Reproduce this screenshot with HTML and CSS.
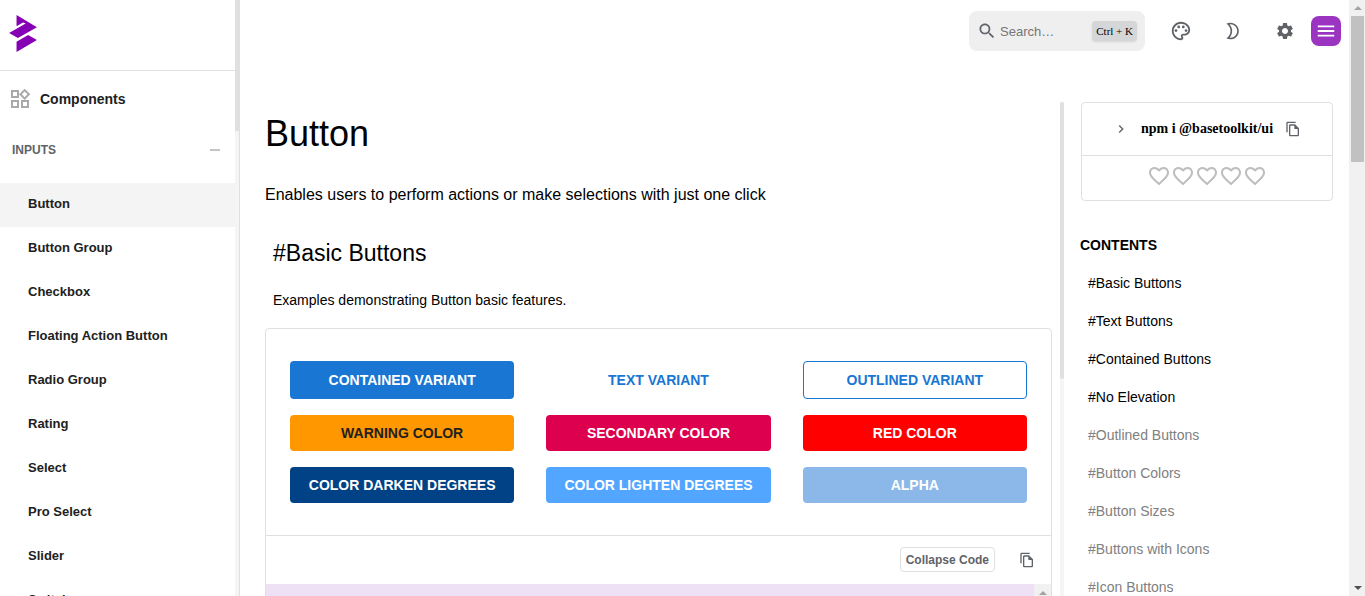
FILE: index.html
```html
<!DOCTYPE html>
<html lang="en">
<head>
<meta charset="utf-8">
<title>Button - Components</title>
<link rel="stylesheet" href="styles.css">
</head>
<body>
<svg class="sprite" aria-hidden="true">
  <symbol id="heart" viewBox="0 0 24 24"><path d="M16.5 3c-1.74 0-3.41.81-4.5 2.09C10.91 3.81 9.24 3 7.5 3 4.42 3 2 5.42 2 8.5c0 3.78 3.4 6.86 8.55 11.54L12 21.35l1.45-1.32C18.6 15.36 22 12.28 22 8.5 22 5.42 19.58 3 16.5 3zm-4.4 15.55l-.1.1-.1-.1C7.14 14.24 4 11.39 4 8.5 4 6.5 5.5 5 7.5 5c1.54 0 3.04.99 3.57 2.36h1.87C13.46 5.99 14.96 5 16.5 5c2 0 3.5 1.5 3.5 3.5 0 2.89-3.14 5.74-7.9 10.05z"/></symbol>
  <symbol id="copy" viewBox="0 0 24 24"><path d="M16 1H4c-1.1 0-2 .9-2 2v14h2V3h12V1zm-1 4H8c-1.1 0-1.99.9-1.99 2L6 21c0 1.1.89 2 1.99 2H19c1.1 0 2-.9 2-2V11l-6-6zM8 21V7h6v5h5v9H8z"/></symbol>
</svg>
<div class="app">
  <aside class="sidebar">
    <div class="sidebar-content">
      <a class="brand" href="#" aria-label="Home">
        <svg class="logo" viewBox="27 45 82 109"><path d="M49 45L109 81 53 113 27 98 76 70 68 67 49 78zM49 124L83 104 109 119 49 154z"/></svg>
      </a>
      <div class="section">
        <svg class="icon icon-24" viewBox="0 0 24 24"><path d="M16.66 4.52l2.83 2.83-2.83 2.83-2.83-2.83 2.83-2.83M9 5v4H5V5h4m10 10v4h-4v-4h4M9 15v4H5v-4h4m7.66-13.31L11 7.34 16.66 13l5.66-5.66-5.66-5.65zM11 3H3v8h8V3zm10 10h-8v8h8v-8zm-10 0H3v8h8v-8z"/></svg>
        <span>Components</span>
      </div>
      <button class="group" type="button"><span>INPUTS</span><span class="minus"></span></button>
      <nav class="nav">
        <a class="active" href="#">Button</a>
        <a href="#">Button Group</a>
        <a href="#">Checkbox</a>
        <a href="#">Floating Action Button</a>
        <a href="#">Radio Group</a>
        <a href="#">Rating</a>
        <a href="#">Select</a>
        <a href="#">Pro Select</a>
        <a href="#">Slider</a>
        <a href="#">Switch</a>
      </nav>
    </div>
    <div class="rail rail-side"><div class="rail-thumb"></div></div>
  </aside>

  <div class="page">
    <header class="topbar">
      <label class="search">
        <svg class="icon icon-20" viewBox="0 0 24 24"><path d="M15.5 14h-.79l-.28-.27C15.41 12.59 16 11.11 16 9.5 16 5.91 13.09 3 9.5 3S3 5.91 3 9.5 5.91 16 9.5 16c1.61 0 3.09-.59 4.23-1.57l.27.28v.79l5 4.99L20.49 19l-4.99-5zm-6 0C7.01 14 5 11.99 5 9.5S7.01 5 9.5 5 14 7.01 14 9.5 11.99 14 9.5 14z"/></svg>
        <input type="text" placeholder="Search…" aria-label="Search">
        <kbd>Ctrl + K</kbd>
      </label>
      <div class="tools">
        <button class="tool" type="button" aria-label="Theme colors">
          <svg class="icon icon-22" viewBox="0 0 24 24"><path d="M12 22C6.49 22 2 17.51 2 12S6.49 2 12 2s10 4.04 10 9c0 3.31-2.69 6-6 6h-1.77c-.28 0-.5.22-.5.5 0 .12.05.23.13.33.41.47.64 1.06.64 1.67 0 1.38-1.12 2.5-2.5 2.5zm0-18c-4.41 0-8 3.59-8 8s3.59 8 8 8c.28 0 .5-.22.5-.5 0-.16-.08-.28-.14-.35-.41-.46-.63-1.05-.63-1.65 0-1.38 1.12-2.5 2.5-2.5H16c2.21 0 4-1.79 4-4 0-3.86-3.59-7-8-7z"/><circle cx="6.5" cy="11.5" r="1.5"/><circle cx="9.5" cy="7.5" r="1.5"/><circle cx="14.5" cy="7.5" r="1.5"/><circle cx="17.5" cy="11.5" r="1.5"/></svg>
        </button>
        <button class="tool" type="button" aria-label="Dark mode">
          <svg class="icon icon-20" viewBox="0 0 24 24"><path d="M9 4c4.41 0 8 3.59 8 8s-3.59 8-8 8c-.34 0-.68-.02-1.01-.07C9.9 17.77 11 15 11 12S9.9 6.23 7.99 4.07C8.32 4.02 8.66 4 9 4m0-2c-1.82 0-3.53.5-5 1.35 2.99 1.73 5 4.95 5 8.65s-2.01 6.92-5 8.65c1.47.85 3.18 1.35 5 1.35 5.52 0 10-4.48 10-10S14.52 2 9 2z"/></svg>
        </button>
        <button class="tool" type="button" aria-label="Settings">
          <svg class="icon icon-20" viewBox="0 0 24 24"><path d="M19.14 12.94c.04-.3.06-.61.06-.94 0-.32-.02-.64-.07-.94l2.03-1.58c.18-.14.23-.41.12-.61l-1.92-3.32c-.12-.22-.37-.29-.59-.22l-2.39.96c-.5-.38-1.03-.7-1.62-.94l-.36-2.54c-.04-.24-.24-.41-.48-.41h-3.84c-.24 0-.43.17-.47.41l-.36 2.54c-.59.24-1.13.57-1.62.94l-2.39-.96c-.22-.08-.47 0-.59.22L2.74 8.87c-.12.21-.08.47.12.61l2.03 1.58c-.05.3-.09.63-.09.94s.02.64.07.94l-2.03 1.58c-.18.14-.23.41-.12.61l1.92 3.32c.12.22.37.29.59.22l2.39-.96c.5.38 1.03.7 1.62.94l.36 2.54c.05.24.24.41.48.41h3.84c.24 0 .44-.17.47-.41l.36-2.54c.59-.24 1.13-.56 1.62-.94l2.39.96c.22.08.47 0 .59-.22l1.92-3.32c.12-.22.07-.47-.12-.61l-2.01-1.58zM12 15.6c-1.98 0-3.6-1.62-3.6-3.6s1.62-3.6 3.6-3.6 3.6 1.62 3.6 3.6-1.62 3.6-3.6 3.6z"/></svg>
        </button>
      </div>
      <button class="menu" type="button" aria-label="Menu">
        <svg class="icon icon-22" viewBox="0 0 24 24"><path d="M3 18h18v-2H3v2zm0-5h18v-2H3v2zm0-7v2h18V6H3z"/></svg>
      </button>
    </header>

    <div class="body">
      <main class="article">
        <h1>Button</h1>
        <p class="lead">Enables users to perform actions or make selections with just one click</p>
        <section>
          <h2>#Basic Buttons</h2>
          <p class="note">Examples demonstrating Button basic features.</p>
          <div class="demo">
            <div class="samples">
              <button class="btn primary" type="button">CONTAINED VARIANT</button>
              <button class="btn text" type="button">TEXT VARIANT</button>
              <button class="btn outlined" type="button">OUTLINED VARIANT</button>
              <button class="btn warning" type="button">WARNING COLOR</button>
              <button class="btn secondary" type="button">SECONDARY COLOR</button>
              <button class="btn red" type="button">RED COLOR</button>
              <button class="btn darken" type="button">COLOR DARKEN DEGREES</button>
              <button class="btn lighten" type="button">COLOR LIGHTEN DEGREES</button>
              <button class="btn alpha" type="button">ALPHA</button>
            </div>
            <div class="demo-bar">
              <button class="collapse" type="button">Collapse Code</button>
              <button class="copy" type="button" aria-label="Copy code"><svg class="icon icon-16"><use href="#copy"/></svg></button>
            </div>
            <div class="code">
              <div class="code-scroll"><svg class="arrow" viewBox="0 0 8 4"><path d="M0 4L4 0 8 4z"/></svg></div>
            </div>
          </div>
        </section>
      </main>

      <aside class="toc">
        <div class="rail rail-toc"><div class="rail-thumb"></div></div>
        <div class="toc-content">
          <div class="package">
            <div class="install">
              <svg class="icon icon-16" viewBox="0 0 24 24"><path d="M10 6L8.59 7.41 13.17 12l-4.58 4.59L10 18l6-6z"/></svg>
              <code>npm i @basetoolkit/ui</code>
              <button class="copy" type="button" aria-label="Copy command"><svg class="icon icon-16"><use href="#copy"/></svg></button>
            </div>
            <div class="hearts">
              <svg class="icon icon-24"><use href="#heart"/></svg>
              <svg class="icon icon-24"><use href="#heart"/></svg>
              <svg class="icon icon-24"><use href="#heart"/></svg>
              <svg class="icon icon-24"><use href="#heart"/></svg>
              <svg class="icon icon-24"><use href="#heart"/></svg>
            </div>
          </div>
          <h3>CONTENTS</h3>
          <nav class="links">
            <a class="seen" href="#">#Basic Buttons</a>
            <a class="seen" href="#">#Text Buttons</a>
            <a class="seen" href="#">#Contained Buttons</a>
            <a class="seen" href="#">#No Elevation</a>
            <a href="#">#Outlined Buttons</a>
            <a href="#">#Button Colors</a>
            <a href="#">#Button Sizes</a>
            <a href="#">#Buttons with Icons</a>
            <a href="#">#Icon Buttons</a>
          </nav>
        </div>
      </aside>
    </div>
  </div>

  <div class="scrollbar">
    <svg class="arrow" viewBox="0 0 8 4"><path d="M0 4L4 0 8 4z"/></svg>
    <div class="scroll-thumb"></div>
    <svg class="arrow arrow-down" viewBox="0 0 8 4"><path d="M0 0L4 4 8 0z"/></svg>
  </div>
</div>
</body>
</html>
```
FILE: styles.css
```css
* { box-sizing: border-box; }

body {
  margin: 0;
  background: #fff;
  color: #000;
  font-family: "Liberation Sans", Arial, sans-serif;
  font-size: 14px;
}

h1, h2, h3, p { margin: 0; font-weight: 400; }
a { color: inherit; text-decoration: none; }

button {
  margin: 0;
  padding: 0;
  border: 0;
  background: none;
  color: inherit;
  font: inherit;
  cursor: pointer;
}

.sprite { display: none; }
.icon { display: block; flex: none; fill: currentColor; }
.icon-16 { width: 16px; height: 16px; }
.icon-20 { width: 20px; height: 20px; }
.icon-22 { width: 22px; height: 22px; }
.icon-24 { width: 24px; height: 24px; }

.app {
  display: grid;
  grid-template-columns: 240px minmax(0, 1fr) 16px;
  height: 100vh;
  overflow: hidden;
}

/* Sidebar */
.sidebar {
  display: flex;
  min-height: 0;
  overflow: hidden;
  border-right: 1px solid #e0e0e0;
}
.sidebar-content { flex: 1; color: #212121; }
.brand {
  display: flex;
  align-items: flex-start;
  height: 71px;
  padding: 15px 9px;
  border-bottom: 1px solid #e0e0e0;
}
.logo { width: 28px; height: 37px; fill: #8500b4; }
.section {
  display: flex;
  align-items: center;
  gap: 8px;
  padding: 16px 8px;
  font-weight: 700;
}
.section .icon { color: #a9a9a9; }
.group {
  display: flex;
  align-items: center;
  justify-content: space-between;
  width: 100%;
  height: 46px;
  padding: 0 15px 0 12px;
  color: #5f6368;
  font-size: 12px;
  font-weight: 700;
}
.minus { width: 10px; height: 2px; background: #c4c4c4; }
.nav { display: flex; flex-direction: column; padding-top: 10px; }
.nav a {
  height: 44px;
  padding: 0 28px;
  font-size: 13px;
  font-weight: 700;
  line-height: 42px;
}
.nav .active { background: #f4f4f4; }

.rail { flex: none; width: 4px; background: #f5f5f5; }
.rail-thumb { background: #e0e0e0; }
.rail-side .rail-thumb { height: 22%; }
.rail-toc .rail-thumb { height: 56%; border-radius: 2px; }

/* Top bar */
.page { display: flex; flex-direction: column; min-height: 0; }
.topbar {
  display: flex;
  align-items: center;
  justify-content: flex-end;
  padding: 11px 8px;
}
.search {
  display: flex;
  align-items: center;
  width: 176px;
  height: 40px;
  padding: 0 8px;
  border-radius: 8px;
  background: #efefef;
  color: #5f6368;
}
.search input {
  flex: 1;
  min-width: 0;
  margin-left: 3px;
  padding: 0;
  border: 0;
  outline: 0;
  background: none;
  color: inherit;
  font: inherit;
  font-size: 13px;
}
.search input::placeholder { color: #757575; opacity: 1; }
.search kbd {
  padding: 0 4px;
  border-radius: 4px;
  background: #d4d6d8;
  box-shadow: 0 1px 2px #d4d6d8;
  color: #000;
  font-family: "Liberation Serif", "Times New Roman", serif;
  font-size: 11px;
  line-height: 20px;
}
.tools { display: flex; align-items: center; gap: 16px; margin: 0 8px 0 18px; }
.tool {
  display: grid;
  place-items: center;
  width: 36px;
  height: 36px;
  color: #5f6368;
}
.menu {
  display: grid;
  place-items: center;
  width: 30px;
  height: 30px;
  border-radius: 8px;
  background: #9c34c2;
  color: #fff;
}

/* Body */
.body {
  display: grid;
  grid-template-columns: minmax(0, 1fr) 289px;
  flex: 1;
  min-height: 0;
  margin-top: 40px;
}
.article { min-height: 0; padding: 10px 8px 0 25px; overflow: hidden; }
h1 { font-size: 36px; line-height: 44px; }
.lead { margin-top: 27px; font-size: 16px; line-height: 24px; }
h2 { margin-top: 30px; padding-left: 8px; font-size: 23px; line-height: 32px; }
.note { margin-top: 21px; padding-left: 8px; line-height: 20px; }

.demo {
  margin-top: 18px;
  border: 1px solid #e0e0e0;
  border-radius: 4px;
}
.samples {
  display: grid;
  grid-template-columns: repeat(3, minmax(0, 1fr));
  gap: 16px 32px;
  padding: 32px 24px;
}
.btn {
  min-height: 36px;
  border-radius: 4px;
  color: #fff;
  font-weight: 700;
}
.primary { background: #1976d2; }
.text { color: #1976d2; }
.outlined { min-height: 38px; border: 1px solid #1976d2; color: #1976d2; }
.warning { background: #ff9800; color: #212121; }
.secondary { background: #dc004e; }
.red { background: #f00; }
.darken { background: #004285; }
.lighten { background: #52a6ff; }
.alpha { background: #8bb8e8; }

.demo-bar {
  display: flex;
  align-items: center;
  justify-content: flex-end;
  gap: 24px;
  height: 49px;
  padding: 0 16px 1px;
  border-top: 1px solid #e0e0e0;
  color: #5f6368;
}
.collapse {
  height: 25px;
  padding: 0 5px;
  border: 1px solid #e0e0e0;
  border-radius: 4px;
  font-size: 12px;
  font-weight: 700;
}
.copy { color: #5f6368; }
.code {
  display: flex;
  justify-content: flex-end;
  height: 400px;
  background: #efe1f5;
}
.code-scroll {
  display: flex;
  justify-content: center;
  width: 17px;
  padding-top: 7px;
  background: #f1f1f1;
}
.arrow { display: block; flex: none; width: 8px; height: 4px; fill: #a3a3a3; }
.arrow-down { fill: #505050; }

/* Table of contents */
.toc { display: flex; min-height: 0; overflow: hidden; }
.toc-content { flex: 1; padding: 0 16px; }
.package {
  margin-left: 1px;
  border: 1px solid #e0e0e0;
  border-radius: 4px;
}
.install {
  display: flex;
  align-items: center;
  justify-content: center;
  gap: 12px;
  height: 53px;
  border-bottom: 1px solid #e0e0e0;
  color: #5f6368;
}
.install code {
  color: #000;
  font-family: "Liberation Serif", "Times New Roman", serif;
  font-size: 14px;
  font-weight: 700;
}
.hearts {
  display: flex;
  justify-content: center;
  padding: 8px 0 12px;
  color: #bdbdbd;
}
h3 { margin-top: 34px; font-size: 14px; font-weight: 700; line-height: 20px; }
.links { display: flex; flex-direction: column; padding: 9px 8px; }
.links a { color: #808080; line-height: 38px; }
.links .seen { color: #000; }

/* Page scrollbar */
.scrollbar {
  display: flex;
  flex-direction: column;
  align-items: center;
  padding: 6px 1px 6px 2px;
  background: #f1f1f1;
}
.scroll-thumb { width: 100%; height: 25%; margin: 6px 0 auto; background: #c1c1c1; }
```
